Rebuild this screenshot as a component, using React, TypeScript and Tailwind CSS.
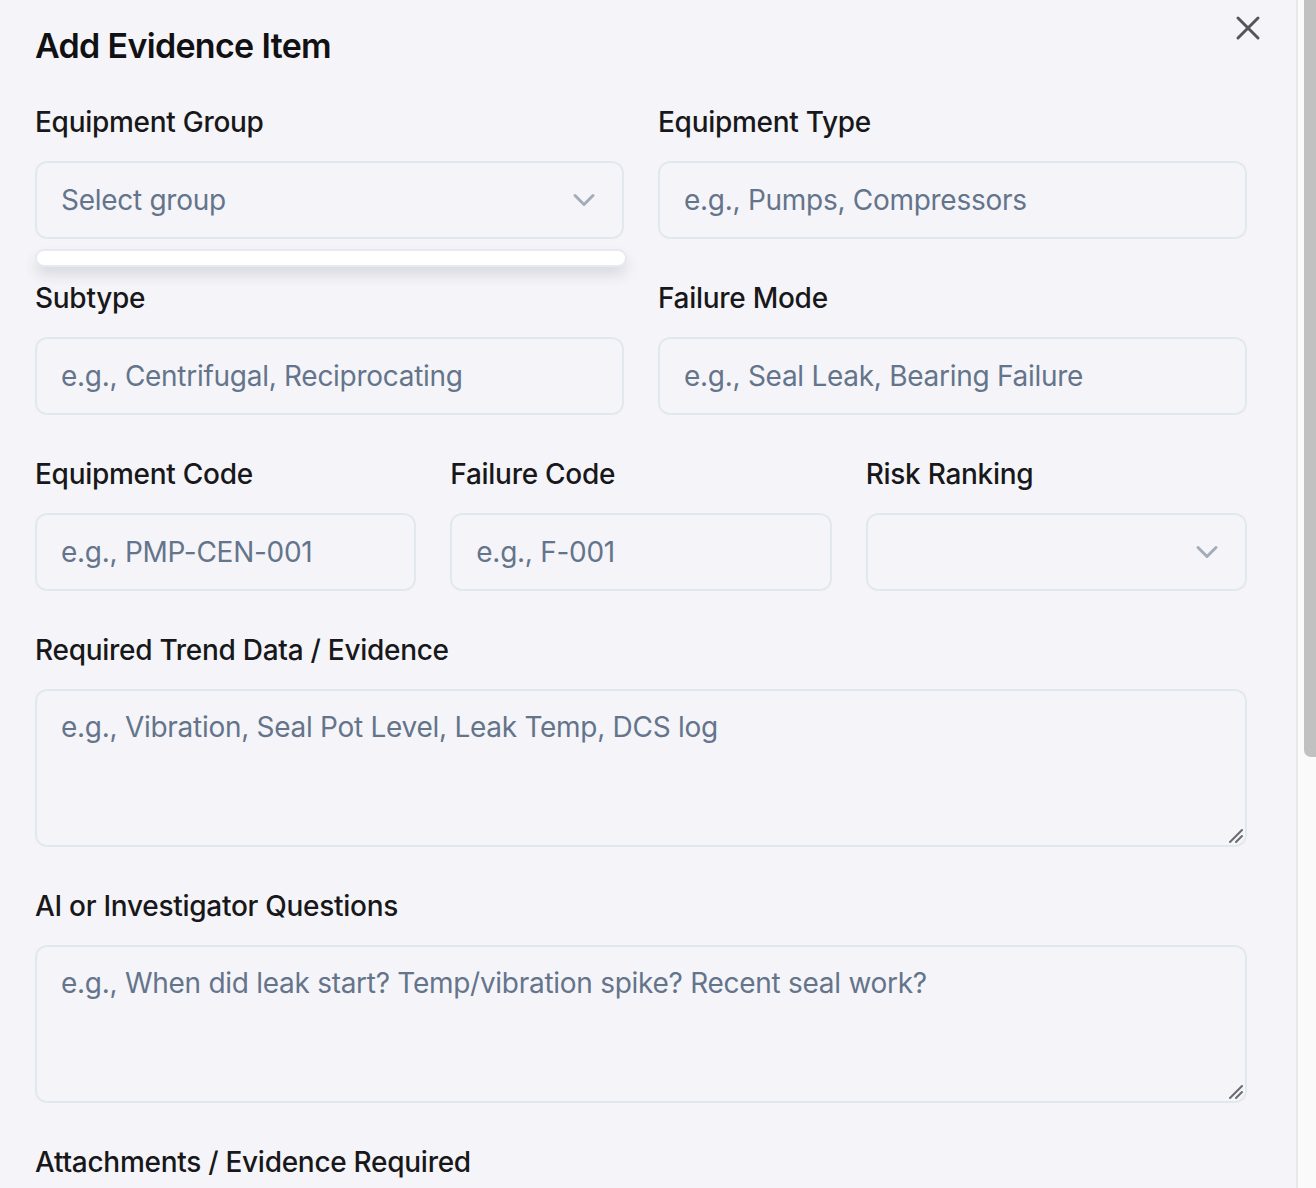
import React from 'react';
import { ChevronDown, X } from 'lucide-react';

const font = { fontFamily: 'Inter, "Noto Sans", "Liberation Sans", sans-serif' };

const Label: React.FC<{ children: React.ReactNode }> = ({ children }) => (
  <label className="block text-[28px] leading-[40px] font-medium tracking-[-0.01em] text-[#18181b] mb-[19px]">
    {children}
  </label>
);

const TextInput: React.FC<{ placeholder: string }> = ({ placeholder }) => (
  <input
    type="text"
    placeholder={placeholder}
    className="w-full h-[78px] px-[24px] rounded-[12px] border-2 border-[#e2e8f0] bg-transparent text-[28px] tracking-[-0.01em] text-[#18181b] placeholder:text-[#64748b] outline-none"
  />
);

const SelectBox: React.FC<{ placeholder?: string; children?: React.ReactNode }> = ({
  placeholder,
  children,
}) => (
  <div className="relative">
    <button
      type="button"
      className="w-full h-[78px] pl-[24px] pr-[20px] rounded-[12px] border-2 border-[#e2e8f0] bg-transparent flex items-center justify-between text-[28px] tracking-[-0.01em] text-[#64748b]"
    >
      <span>{placeholder}</span>
      <ChevronDown size={36} strokeWidth={2} className="text-[#a3acba]" />
    </button>
    {children}
  </div>
);

const TextArea: React.FC<{ placeholder: string }> = ({ placeholder }) => (
  <div className="relative">
    <textarea
      placeholder={placeholder}
      className="block w-full h-[158px] px-[24px] pt-[16px] rounded-[12px] border-2 border-[#e2e8f0] bg-transparent text-[28px] leading-[40px] tracking-[-0.01em] text-[#18181b] placeholder:text-[#64748b] outline-none resize-none"
    />
    {/* resize grip */}
    <svg
      width="16"
      height="16"
      viewBox="0 0 16 16"
      className="absolute right-[3px] bottom-[3px] text-[#6b6b6f]"
    >
      <path d="M2 14 14 2M8 14l6-6" stroke="currentColor" strokeWidth="2" strokeLinecap="round" />
    </svg>
  </div>
);

export default function App() {
  return (
    <div className="flex h-[1188px] w-full overflow-hidden" style={font}>
      <div className="relative flex-1 bg-[#f5f5f9] pl-[35px] pt-[22px] overflow-hidden">
        <button type="button" className="absolute top-[8px] right-[28px] text-[#555559]">
          <X size={40} strokeWidth={1.8} />
        </button>

        <div className="w-[1212px]">
          <h2 className="text-[34px] leading-[48px] font-semibold tracking-[-0.02em] text-[#111113] mb-[32px]">
            Add Evidence Item
          </h2>

          <form className="flex flex-col gap-[39px]">
            <div className="grid grid-cols-2 gap-x-[34px]">
              <div>
                <Label>Equipment Group</Label>
                <SelectBox placeholder="Select group">
                  <div className="absolute left-0 top-[88px] w-[592px] h-[18px] rounded-[9px] bg-white border-2 border-[#e6eaf0] shadow-[0_8px_14px_rgba(15,23,42,0.12)] z-10" />
                </SelectBox>
              </div>
              <div>
                <Label>Equipment Type</Label>
                <TextInput placeholder="e.g., Pumps, Compressors" />
              </div>
            </div>

            <div className="grid grid-cols-2 gap-x-[34px]">
              <div>
                <Label>Subtype</Label>
                <TextInput placeholder="e.g., Centrifugal, Reciprocating" />
              </div>
              <div>
                <Label>Failure Mode</Label>
                <TextInput placeholder="e.g., Seal Leak, Bearing Failure" />
              </div>
            </div>

            <div className="grid grid-cols-3 gap-x-[34px]">
              <div>
                <Label>Equipment Code</Label>
                <TextInput placeholder="e.g., PMP-CEN-001" />
              </div>
              <div>
                <Label>Failure Code</Label>
                <TextInput placeholder="e.g., F-001" />
              </div>
              <div>
                <Label>Risk Ranking</Label>
                <SelectBox />
              </div>
            </div>

            <div>
              <Label>Required Trend Data / Evidence</Label>
              <TextArea placeholder="e.g., Vibration, Seal Pot Level, Leak Temp, DCS log" />
            </div>

            <div>
              <Label>AI or Investigator Questions</Label>
              <TextArea placeholder="e.g., When did leak start? Temp/vibration spike? Recent seal work?" />
            </div>

            <div>
              <Label>Attachments / Evidence Required</Label>
              <TextInput placeholder="e.g., Photos, Work orders" />
            </div>
          </form>
        </div>
      </div>

      {/* scrollbar */}
      <div className="w-[20px] border-l-2 border-[#e8e8e8] bg-[#fafafa] flex justify-end">
        <div className="w-[12px] h-[757px] bg-[#c1c1c1] rounded-bl-[7px]" />
      </div>
    </div>
  );
}
